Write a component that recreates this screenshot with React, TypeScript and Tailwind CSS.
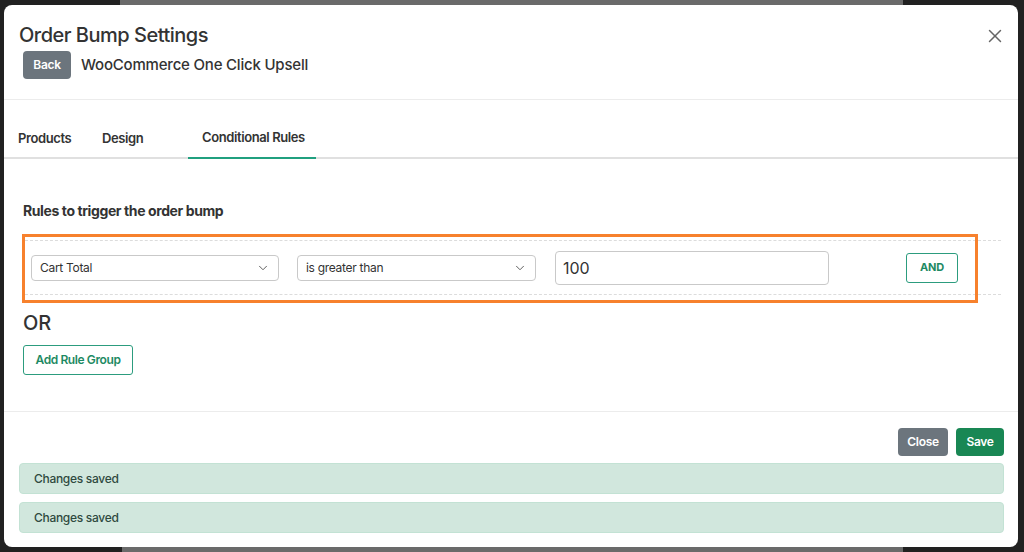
import { ChevronDown, X } from "lucide-react";

const font = { fontFamily: "Inter, 'Noto Sans', sans-serif" };

function Select({ value, width }: { value: string; width: string }) {
  return (
    <div
      className={`${width} flex h-[26px] items-center justify-between rounded-[4px] border border-[#c9c9c9] bg-white pl-[8px] pr-[8px] text-[12px] text-[#333]`}
    >
      <span className="tracking-[-0.3px]">{value}</span>
      <ChevronDown size={14} strokeWidth={1.6} className="text-[#555]" />
    </div>
  );
}

export default function App() {
  return (
    <div className="relative h-[552px] w-[1024px] overflow-hidden bg-[#212121]" style={font}>
      {/* backdrop bits peeking above/below the modal */}
      <div className="absolute left-[120px] top-0 h-[5px] w-[783px] bg-[#6a6a6a]" />
      <div className="absolute bottom-0 left-[122px] h-[5px] w-[781px] bg-[#6a6a6a]" />

      <div className="relative ml-[4px] mt-[5px] flex h-[542px] w-[1014px] flex-col rounded-[8px] bg-white">
        {/* header */}
        <div className="h-[95px] border-b border-[#ececec] px-[15px] pt-[17px]">
          <div className="flex items-center justify-between">
            <div className="text-[20px] font-medium leading-[26px] tracking-[-0.5px] text-[#333]">
              Order Bump Settings
            </div>
            <X size={22} strokeWidth={1.6} className="mr-[-3px] mt-[2px] text-[#666]" />
          </div>
          <div className="mt-[3px] flex items-center gap-[10px] pl-[4px]">
            <button className="h-[28px] w-[48px] rounded-[4px] bg-[#6c757d] text-[12px] font-semibold tracking-[-0.3px] text-white">
              Back
            </button>
            <span className="text-[15px] font-medium tracking-[-0.2px] text-[#333]">WooCommerce One Click Upsell</span>
          </div>
        </div>

        {/* tabs */}
        <div className="mt-[19px] flex border-b-2 border-[#e0e0e0] text-[13px] font-semibold tracking-[-0.4px] text-[#333]">
          <div className="mb-[-2px] flex h-[40px] w-[84px] items-center pl-[14px]">Products</div>
          <div className="mb-[-2px] flex h-[40px] w-[100px] items-center pl-[14px]">Design</div>
          <div className="mb-[-2px] flex h-[40px] w-[128px] items-center border-b-2 border-[#20a07f] pl-[14px]">
            Conditional Rules
          </div>
        </div>

        {/* content */}
        <div className="border-b border-[#ececec] px-[19px] pb-[36px] pt-[42px]">
          <div className="text-[14px] font-bold leading-[20px] tracking-[-0.4px] text-[#333]">
            Rules to trigger the order bump
          </div>

          <div className="relative mt-[19px] ml-[2px] w-[976px] border-y border-dashed border-[#dcdcdc]">
            <div className="flex h-[53px] items-center pl-[6px]">
              <Select value="Cart Total" width="w-[248px]" />
              <div className="w-[18px]" />
              <Select value="is greater than" width="w-[239px]" />
              <div className="w-[19px]" />
              <div className="flex h-[34px] w-[274px] items-center rounded-[4px] border border-[#c9c9c9] px-[7px] text-[16px] text-[#333]">
                100
              </div>
              <div className="w-[77px]" />
              <button className="h-[30px] w-[52px] rounded-[3px] border border-[#2c9c7e] text-[11px] font-bold tracking-[-0.2px] text-[#1d8a63]">
                AND
              </button>
            </div>
            {/* highlight annotation */}
            <div className="pointer-events-none absolute left-[-3px] top-[-7px] h-[69px] w-[956px] border-[3px] border-[#f7812d]" />
          </div>

          <div className="mt-[14px] text-[20px] font-medium leading-[28px] text-[#333]">OR</div>
          <button className="mt-[8px] h-[30px] w-[110px] rounded-[3px] border border-[#2c9c7e] text-[12px] font-semibold tracking-[-0.4px] text-[#1d8a63]">
            Add Rule Group
          </button>
        </div>

        {/* footer */}
        <div className="pl-[15px] pr-[14px] pt-[16px]">
          <div className="flex justify-end gap-[8px]">
            <button className="h-[28px] w-[50px] rounded-[4px] bg-[#6c757d] text-[12px] font-semibold tracking-[-0.3px] text-white">
              Close
            </button>
            <button className="h-[28px] w-[48px] rounded-[4px] bg-[#198754] text-[12px] font-semibold tracking-[-0.3px] text-white">
              Save
            </button>
          </div>
          <div className="mt-[7px] flex h-[31px] w-full items-center rounded-[4px] border border-[#c3e2d4] bg-[#d1e7dd] pl-[14px] text-[12px] font-medium tracking-[-0.3px] text-[#2f4a3f]">
            Changes saved
          </div>
          <div className="mt-[8px] flex h-[31px] w-full items-center rounded-[4px] border border-[#c3e2d4] bg-[#d1e7dd] pl-[14px] text-[12px] font-medium tracking-[-0.3px] text-[#2f4a3f]">
            Changes saved
          </div>
        </div>
      </div>
    </div>
  );
}
